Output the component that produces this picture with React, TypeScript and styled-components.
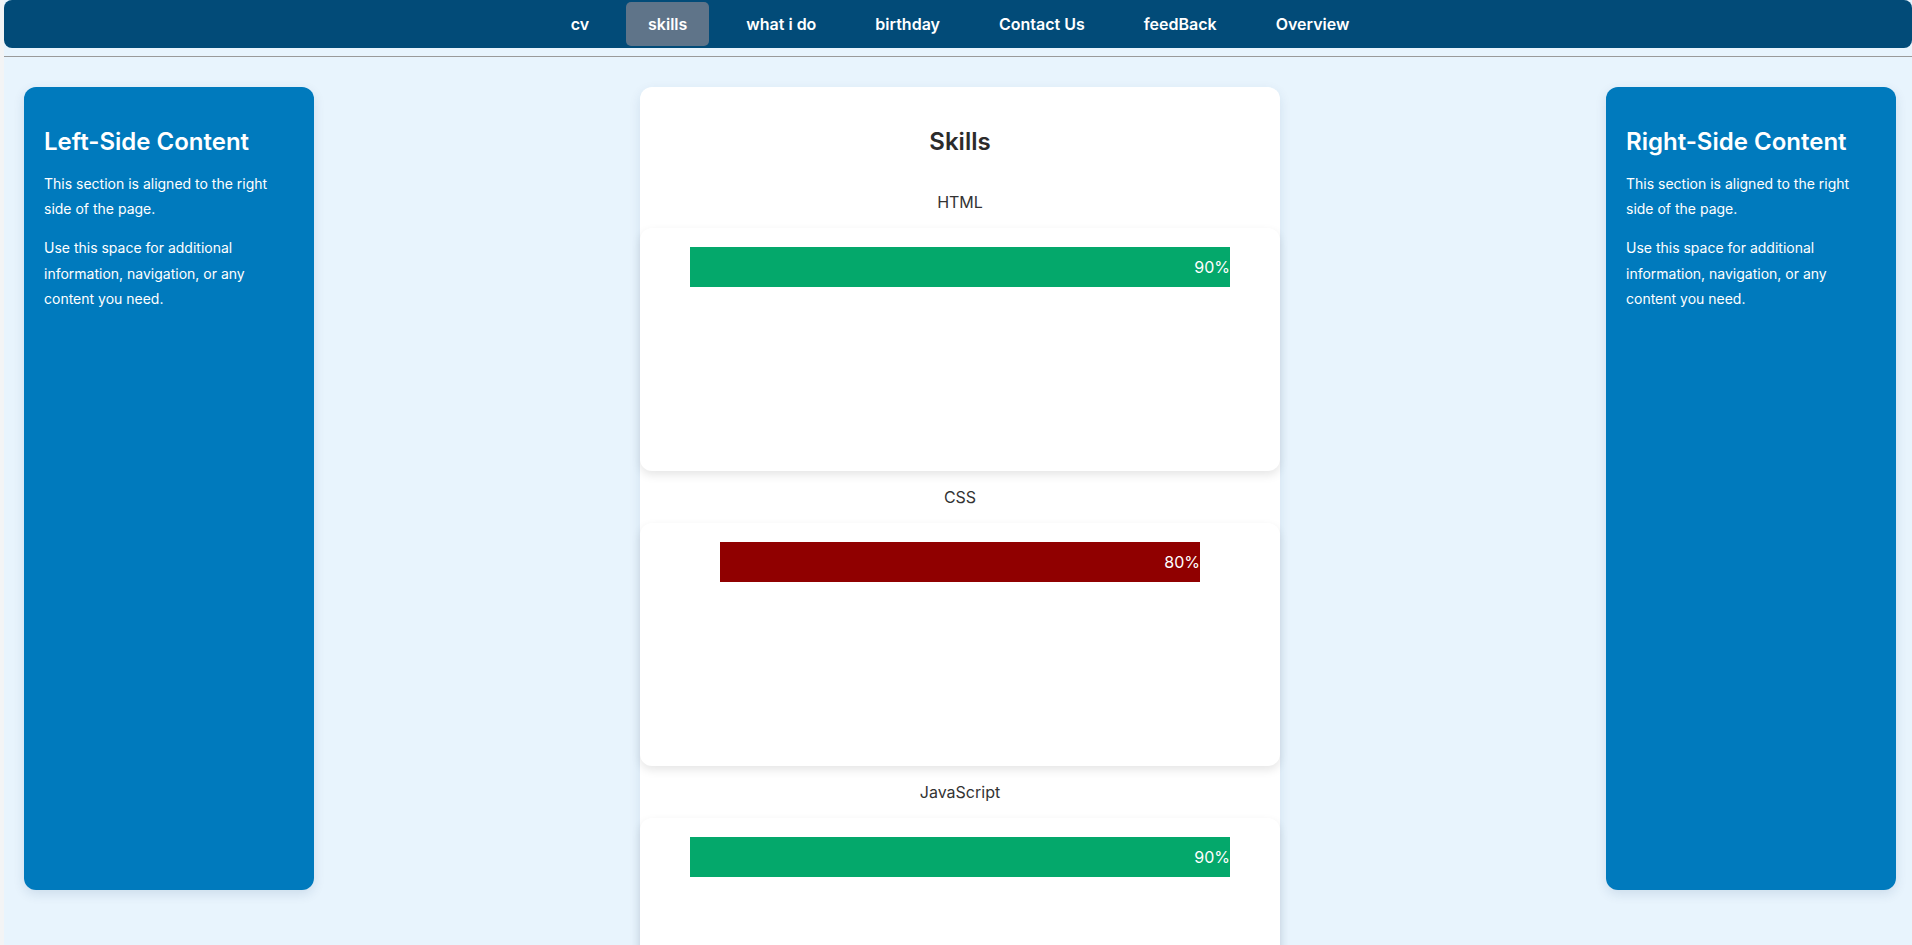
import React from "react";
import styled, { createGlobalStyle } from "styled-components";

const GlobalStyle = createGlobalStyle`
  html, body {
    margin: 0;
    padding: 0;
    background: #f3f4f5;
    font-family: Inter, "Noto Sans", Arial, sans-serif;
  }
  * {
    box-sizing: border-box;
  }
`;

const Page = styled.div`
  margin-left: 4px;
  min-height: 100vh;
  background: #e8f4fd;
`;

const Nav = styled.nav`
  height: 48px;
  display: flex;
  align-items: center;
  justify-content: center;
  gap: 15px;
  padding-left: 4px;
  background: #024b78;
  border-radius: 8px;
`;

const NavItem = styled.a<{ $active?: boolean }>`
  padding: 12px 22px;
  line-height: 20px;
  font-size: 16px;
  font-weight: 600;
  color: #ffffff;
  text-decoration: none;
  border-radius: 5px;
  background: ${(p) => (p.$active ? "#5f7489" : "transparent")};
  cursor: pointer;
`;

const Divider = styled.div`
  margin-top: 8px;
  border-top: 1px solid #9a9a9a;
`;

const Main = styled.main`
  display: flex;
  justify-content: space-between;
  align-items: flex-start;
  padding: 30px 16px 40px 20px;
`;

const SideCard = styled.aside`
  width: 290px;
  height: 85vh;
  padding: 20px;
  background: #007abd;
  color: #ffffff;
  border-radius: 12px;
  box-shadow: 0 4px 12px rgba(0, 60, 110, 0.12);
`;

const SideTitle = styled.h2`
  margin: 20px 0 15px;
  font-size: 24px;
  font-weight: 600;
  line-height: 29px;
`;

const SideText = styled.p`
  margin: 14px 0;
  font-size: 14px;
  line-height: 1.8;
`;

const SkillsCard = styled.section`
  width: 640px;
  display: flex;
  flex-direction: column;
  padding: 20px 0;
  background: #ffffff;
  border-radius: 12px;
  box-shadow: 0 4px 12px rgba(0, 60, 110, 0.1);
`;

const SkillsTitle = styled.h2`
  margin: 20px 0 20px;
  text-align: center;
  font-size: 24px;
  font-weight: 600;
  line-height: 29px;
  color: #2b2b2b;
`;

const SkillLabel = styled.p`
  margin: 16px 0;
  text-align: center;
  font-size: 16px;
  line-height: 20px;
  color: #333333;
`;

const SkillBox = styled.div`
  height: 243px;
  padding: 19px 20px 20px;
  background: #ffffff;
  border-radius: 12px;
  box-shadow: 0 4px 10px rgba(0, 0, 0, 0.1);
`;

const Bar = styled.div<{ $color: string }>`
  margin: 0 auto;
  height: 40px;
  line-height: 40px;
  text-align: right;
  font-size: 16px;
  color: #ffffff;
  background: ${(p) => p.$color};
`;

const skills = [
  { name: "HTML", level: 90, color: "#04a86b" },
  { name: "CSS", level: 80, color: "#900000" },
  { name: "JavaScript", level: 90, color: "#04a86b" },
  { name: "React", level: 80, color: "#900000" },
];

const navLinks = ["cv", "skills", "what i do", "birthday", "Contact Us", "feedBack", "Overview"];

const Side: React.FC<{ title: string }> = ({ title }) => (
  <SideCard>
    <SideTitle>{title}</SideTitle>
    <SideText>This section is aligned to the right side of the page.</SideText>
    <SideText>Use this space for additional information, navigation, or any content you need.</SideText>
  </SideCard>
);

const App: React.FC = () => {
  return (
    <>
      <GlobalStyle />
      <Page>
        <Nav>
          {navLinks.map((l) => (
            <NavItem key={l} $active={l === "skills"}>
              {l}
            </NavItem>
          ))}
        </Nav>
        <Divider />
        <Main>
          <Side title="Left-Side Content" />
          <SkillsCard>
            <SkillsTitle>Skills</SkillsTitle>
            {skills.map((s) => (
              <React.Fragment key={s.name}>
                <SkillLabel>{s.name}</SkillLabel>
                <SkillBox>
                  <Bar $color={s.color} style={{ width: `${s.level}%` }}>
                    {s.level}%
                  </Bar>
                </SkillBox>
              </React.Fragment>
            ))}
          </SkillsCard>
          <Side title="Right-Side Content" />
        </Main>
      </Page>
    </>
  );
};

export default App;
